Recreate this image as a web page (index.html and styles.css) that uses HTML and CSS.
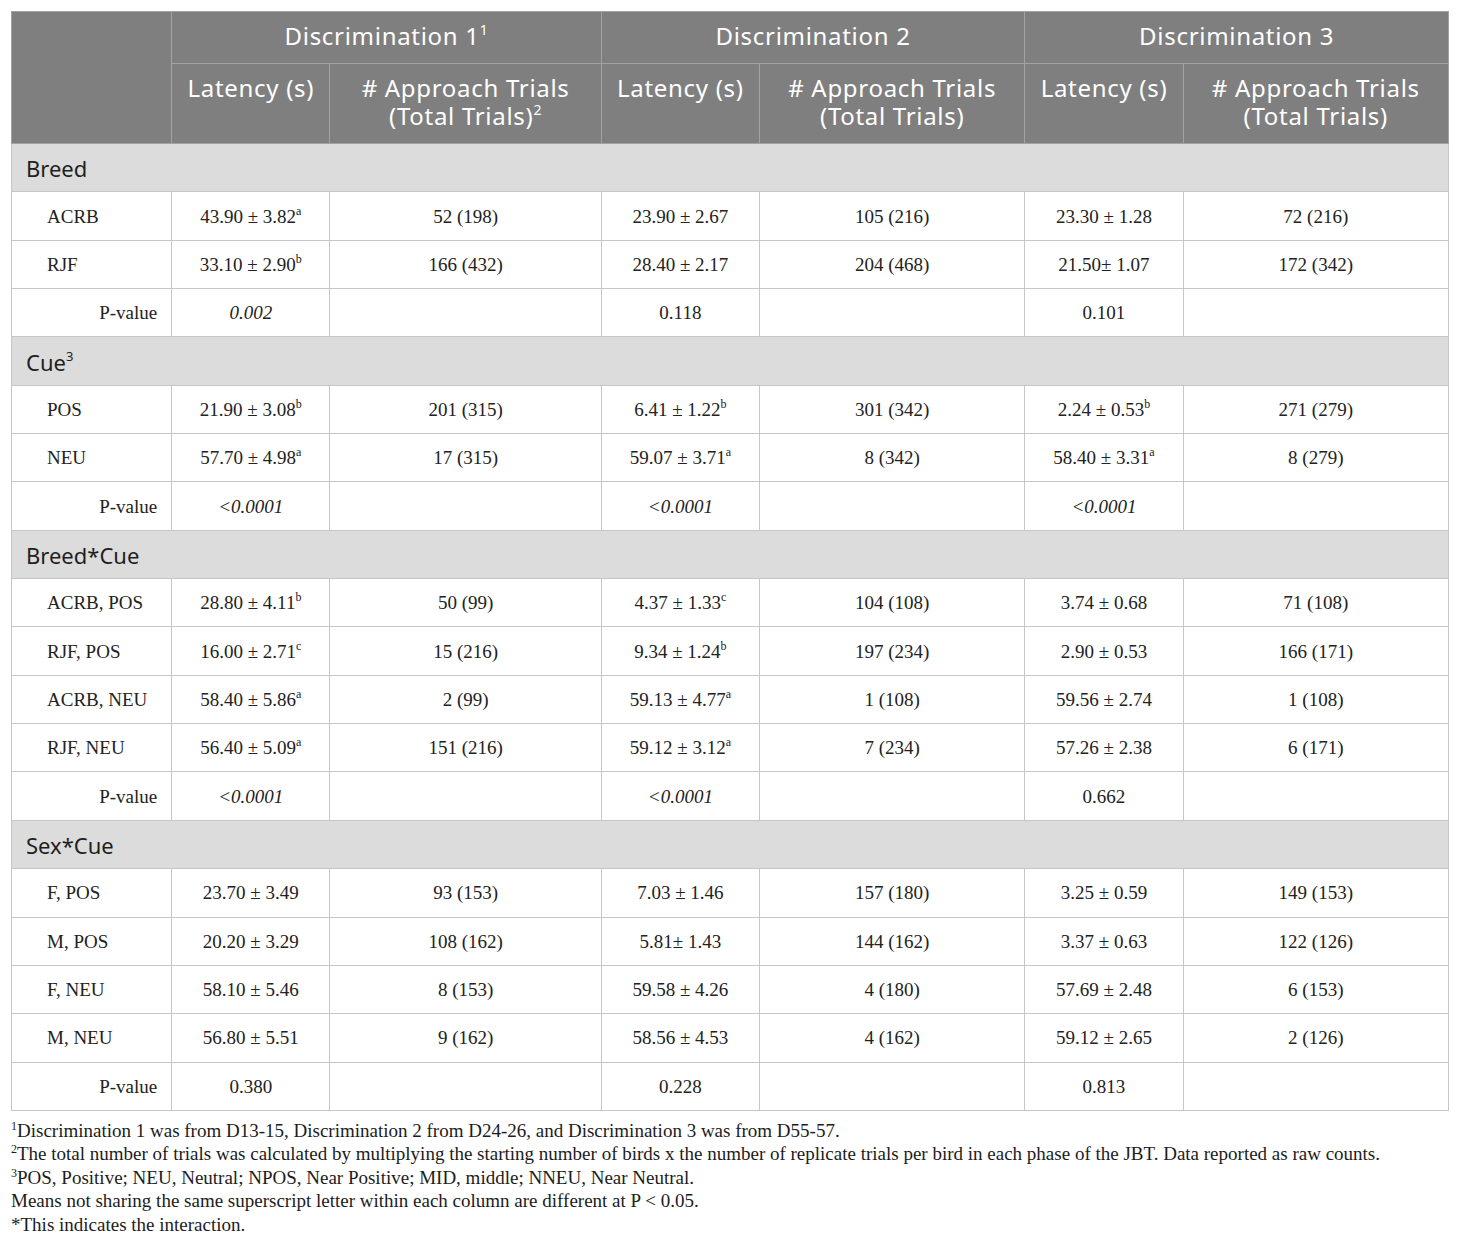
FILE: index.html
```html
<!DOCTYPE html>
<html lang="en">
<head>
    <meta charset="UTF-8">
    <title>Judgement bias results</title>
    <link rel="stylesheet" href="styles.css">
</head>
<body>
    <div class="wrap">
        <table class="results">
            <colgroup>
                <col class="c-label">
                <col class="c-lat">
                <col class="c-trials1">
                <col class="c-lat">
                <col class="c-trials">
                <col class="c-lat">
                <col class="c-trials">
            </colgroup>
            <thead>
                <tr class="head-top">
                    <th rowspan="2"></th>
                    <th colspan="2">Discrimination 1<sup>1</sup></th>
                    <th colspan="2">Discrimination 2</th>
                    <th colspan="2">Discrimination 3</th>
                </tr>
                <tr class="head-sub">
                    <th>Latency (s)</th>
                    <th># Approach Trials<br>(Total Trials)<sup>2</sup></th>
                    <th>Latency (s)</th>
                    <th># Approach Trials<br>(Total Trials)</th>
                    <th>Latency (s)</th>
                    <th># Approach Trials<br>(Total Trials)</th>
                </tr>
            </thead>
            <tbody>
                <tr class="section"><td colspan="7">Breed</td></tr>
                <tr>
                    <td class="name">ACRB</td>
                    <td>43.90 ± 3.82<sup>a</sup></td><td>52 (198)</td>
                    <td>23.90 ± 2.67</td><td>105 (216)</td>
                    <td>23.30 ± 1.28</td><td>72 (216)</td>
                </tr>
                <tr>
                    <td class="name">RJF</td>
                    <td>33.10 ± 2.90<sup>b</sup></td><td>166 (432)</td>
                    <td>28.40 ± 2.17</td><td>204 (468)</td>
                    <td>21.50± 1.07</td><td>172 (342)</td>
                </tr>
                <tr>
                    <td class="pval">P-value</td>
                    <td><em>0.002</em></td><td></td>
                    <td>0.118</td><td></td>
                    <td>0.101</td><td></td>
                </tr>

                <tr class="section"><td colspan="7">Cue<sup>3</sup></td></tr>
                <tr>
                    <td class="name">POS</td>
                    <td>21.90 ± 3.08<sup>b</sup></td><td>201 (315)</td>
                    <td>6.41 ± 1.22<sup>b</sup></td><td>301 (342)</td>
                    <td>2.24 ± 0.53<sup>b</sup></td><td>271 (279)</td>
                </tr>
                <tr>
                    <td class="name">NEU</td>
                    <td>57.70 ± 4.98<sup>a</sup></td><td>17 (315)</td>
                    <td>59.07 ± 3.71<sup>a</sup></td><td>8 (342)</td>
                    <td>58.40 ± 3.31<sup>a</sup></td><td>8 (279)</td>
                </tr>
                <tr>
                    <td class="pval">P-value</td>
                    <td><em>&lt;0.0001</em></td><td></td>
                    <td><em>&lt;0.0001</em></td><td></td>
                    <td><em>&lt;0.0001</em></td><td></td>
                </tr>

                <tr class="section"><td colspan="7">Breed*Cue</td></tr>
                <tr>
                    <td class="name">ACRB, POS</td>
                    <td>28.80 ± 4.11<sup>b</sup></td><td>50 (99)</td>
                    <td>4.37 ± 1.33<sup>c</sup></td><td>104 (108)</td>
                    <td>3.74 ± 0.68</td><td>71 (108)</td>
                </tr>
                <tr>
                    <td class="name">RJF, POS</td>
                    <td>16.00 ± 2.71<sup>c</sup></td><td>15 (216)</td>
                    <td>9.34 ± 1.24<sup>b</sup></td><td>197 (234)</td>
                    <td>2.90 ± 0.53</td><td>166 (171)</td>
                </tr>
                <tr>
                    <td class="name">ACRB, NEU</td>
                    <td>58.40 ± 5.86<sup>a</sup></td><td>2 (99)</td>
                    <td>59.13 ± 4.77<sup>a</sup></td><td>1 (108)</td>
                    <td>59.56 ± 2.74</td><td>1 (108)</td>
                </tr>
                <tr>
                    <td class="name">RJF, NEU</td>
                    <td>56.40 ± 5.09<sup>a</sup></td><td>151 (216)</td>
                    <td>59.12 ± 3.12<sup>a</sup></td><td>7 (234)</td>
                    <td>57.26 ± 2.38</td><td>6 (171)</td>
                </tr>
                <tr>
                    <td class="pval">P-value</td>
                    <td><em>&lt;0.0001</em></td><td></td>
                    <td><em>&lt;0.0001</em></td><td></td>
                    <td>0.662</td><td></td>
                </tr>

                <tr class="section"><td colspan="7">Sex*Cue</td></tr>
                <tr>
                    <td class="name">F, POS</td>
                    <td>23.70 ± 3.49</td><td>93 (153)</td>
                    <td>7.03 ± 1.46</td><td>157 (180)</td>
                    <td>3.25 ± 0.59</td><td>149 (153)</td>
                </tr>
                <tr>
                    <td class="name">M, POS</td>
                    <td>20.20 ± 3.29</td><td>108 (162)</td>
                    <td>5.81± 1.43</td><td>144 (162)</td>
                    <td>3.37 ± 0.63</td><td>122 (126)</td>
                </tr>
                <tr>
                    <td class="name">F, NEU</td>
                    <td>58.10 ± 5.46</td><td>8 (153)</td>
                    <td>59.58 ± 4.26</td><td>4 (180)</td>
                    <td>57.69 ± 2.48</td><td>6 (153)</td>
                </tr>
                <tr>
                    <td class="name">M, NEU</td>
                    <td>56.80 ± 5.51</td><td>9 (162)</td>
                    <td>58.56 ± 4.53</td><td>4 (162)</td>
                    <td>59.12 ± 2.65</td><td>2 (126)</td>
                </tr>
                <tr>
                    <td class="pval">P-value</td>
                    <td>0.380</td><td></td>
                    <td>0.228</td><td></td>
                    <td>0.813</td><td></td>
                </tr>
            </tbody>
        </table>

        <div class="notes">
            <p><sup>1</sup>Discrimination 1 was from D13-15, Discrimination 2 from D24-26, and Discrimination 3 was from D55-57.</p>
            <p><sup>2</sup>The total number of trials was calculated by multiplying the starting number of birds x the number of replicate trials per bird in each phase of the JBT. Data reported as raw counts.</p>
            <p><sup>3</sup>POS, Positive; NEU, Neutral; NPOS, Near Positive; MID, middle; NNEU, Near Neutral.</p>
            <p>Means not sharing the same superscript letter within each column are different at P &lt; 0.05.</p>
            <p>*This indicates the interaction.</p>
        </div>
    </div>
</body>
</html>
```

FILE: styles.css
```css
:root {
    --head-bg: #7f7f7f;
    --head-line: #a3a3a3;
    --section-bg: #dcdcdc;
    --grid: #c6c6c6;
    --text: #222222;
}

* {
    margin: 0;
    padding: 0;
    box-sizing: border-box;
}

body {
    background: #ffffff;
    color: var(--text);
    font-family: "Liberation Serif", "Times New Roman", serif;
}

.wrap {
    padding: 11px 0 0 11px;
    width: 1450px;
}

.results {
    width: 1438px;
    border-collapse: collapse;
    table-layout: fixed;
}

.c-label { width: 160px; }
.c-lat { width: 158px; }
.c-trials1 { width: 271px; }
.c-trials { width: 265px; }

/* header */

.results th {
    background: var(--head-bg);
    color: #ffffff;
    font-family: "Noto Sans", "Open Sans", sans-serif;
    font-weight: 400;
    font-size: 24px;
    letter-spacing: 0.7px;
    line-height: 28px;
    border: 1px solid var(--head-line);
    text-align: center;
    vertical-align: top;
}

.head-top th {
    height: 52px;
    padding-top: 10px;
}

.head-sub th {
    height: 80px;
    padding-top: 10px;
}

.results th sup {
    font-size: 14px;
    line-height: 0;
    vertical-align: 10px;
}

/* body */

.results td {
    height: 48.35px;
    border: 1px solid var(--grid);
    text-align: center;
    vertical-align: middle;
    font-size: 19px;
    padding-top: 1px;
}

.results td sup {
    font-size: 12px;
    line-height: 0;
    vertical-align: 8px;
}

.results td.name {
    text-align: left;
    padding-left: 35px;
}

.results td.pval {
    text-align: right;
    padding-right: 14px;
}

.section td {
    background: var(--section-bg);
    text-align: left;
    padding-left: 14px;
    font-family: "Noto Sans", "Open Sans", sans-serif;
    font-size: 22px;
    color: #1f1f1f;
}

.section td sup {
    font-size: 13px;
    vertical-align: 10px;
}

/* footnotes */

.notes {
    padding-top: 8px;
    font-size: 19px;
    line-height: 23.4px;
    color: #1c1c1c;
}

.notes sup {
    font-size: 12px;
    line-height: 0;
    vertical-align: 7px;
}
```
